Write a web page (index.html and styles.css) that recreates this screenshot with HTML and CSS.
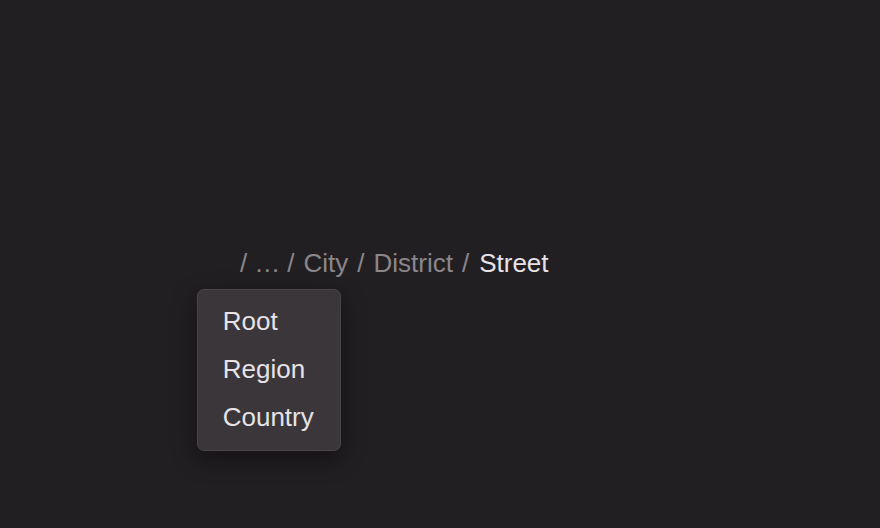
FILE: index.html
```html
<!DOCTYPE html>
<html>
<head>
<meta charset="utf-8">
<link rel="stylesheet" href="styles.css">
</head>
<body>
<main class="stage">
  <nav class="crumbs" aria-label="Breadcrumb">
    <span class="sep">/</span>
    <span class="more">
      <span class="more-btn">…</span>
      <ul class="menu">
        <li class="menu-item">Root</li>
        <li class="menu-item">Region</li>
        <li class="menu-item">Country</li>
      </ul>
    </span>
    <span class="sep">/</span>
    <span class="crumb">City</span>
    <span class="sep">/</span>
    <span class="crumb">District</span>
    <span class="sep">/</span>
    <span class="crumb current">Street</span>
  </nav>
</main>
</body>
</html>
```
FILE: styles.css
```css
html, body {
  margin: 0;
  padding: 0;
  background: #221f23;
  height: 100%;
}
body {
  font-family: "Liberation Sans", Arial, sans-serif;
}
.stage {
  padding: 248px 0 0 240px;
}
.crumbs {
  display: flex;
  align-items: baseline;
  gap: 9px;
  font-size: 26px;
  line-height: 30px;
  color: #8a868a;
}
.sep {
  color: #8a868a;
}
.crumb {
  color: #8a868a;
}
.current {
  color: #e6e2e6;
  margin-left: 1px;
}
.more {
  position: relative;
  margin: 0 -2px;
}
.more-btn {
  color: #8a868a;
}
.menu {
  position: absolute;
  top: 41px;
  left: calc(50% + 1.5px);
  transform: translateX(-50%);
  margin: 0;
  padding: 7px 0 9px;
  list-style: none;
  background: #3a363a;
  border: 1px solid #4a464b;
  border-radius: 7px;
  box-shadow: 0 8px 24px rgba(0, 0, 0, 0.45);
}
.menu-item {
  padding: 0 26px 0 25px;
  height: 48px;
  line-height: 48px;
  font-size: 26px;
  color: #e6e2e6;
  white-space: nowrap;
}
```
